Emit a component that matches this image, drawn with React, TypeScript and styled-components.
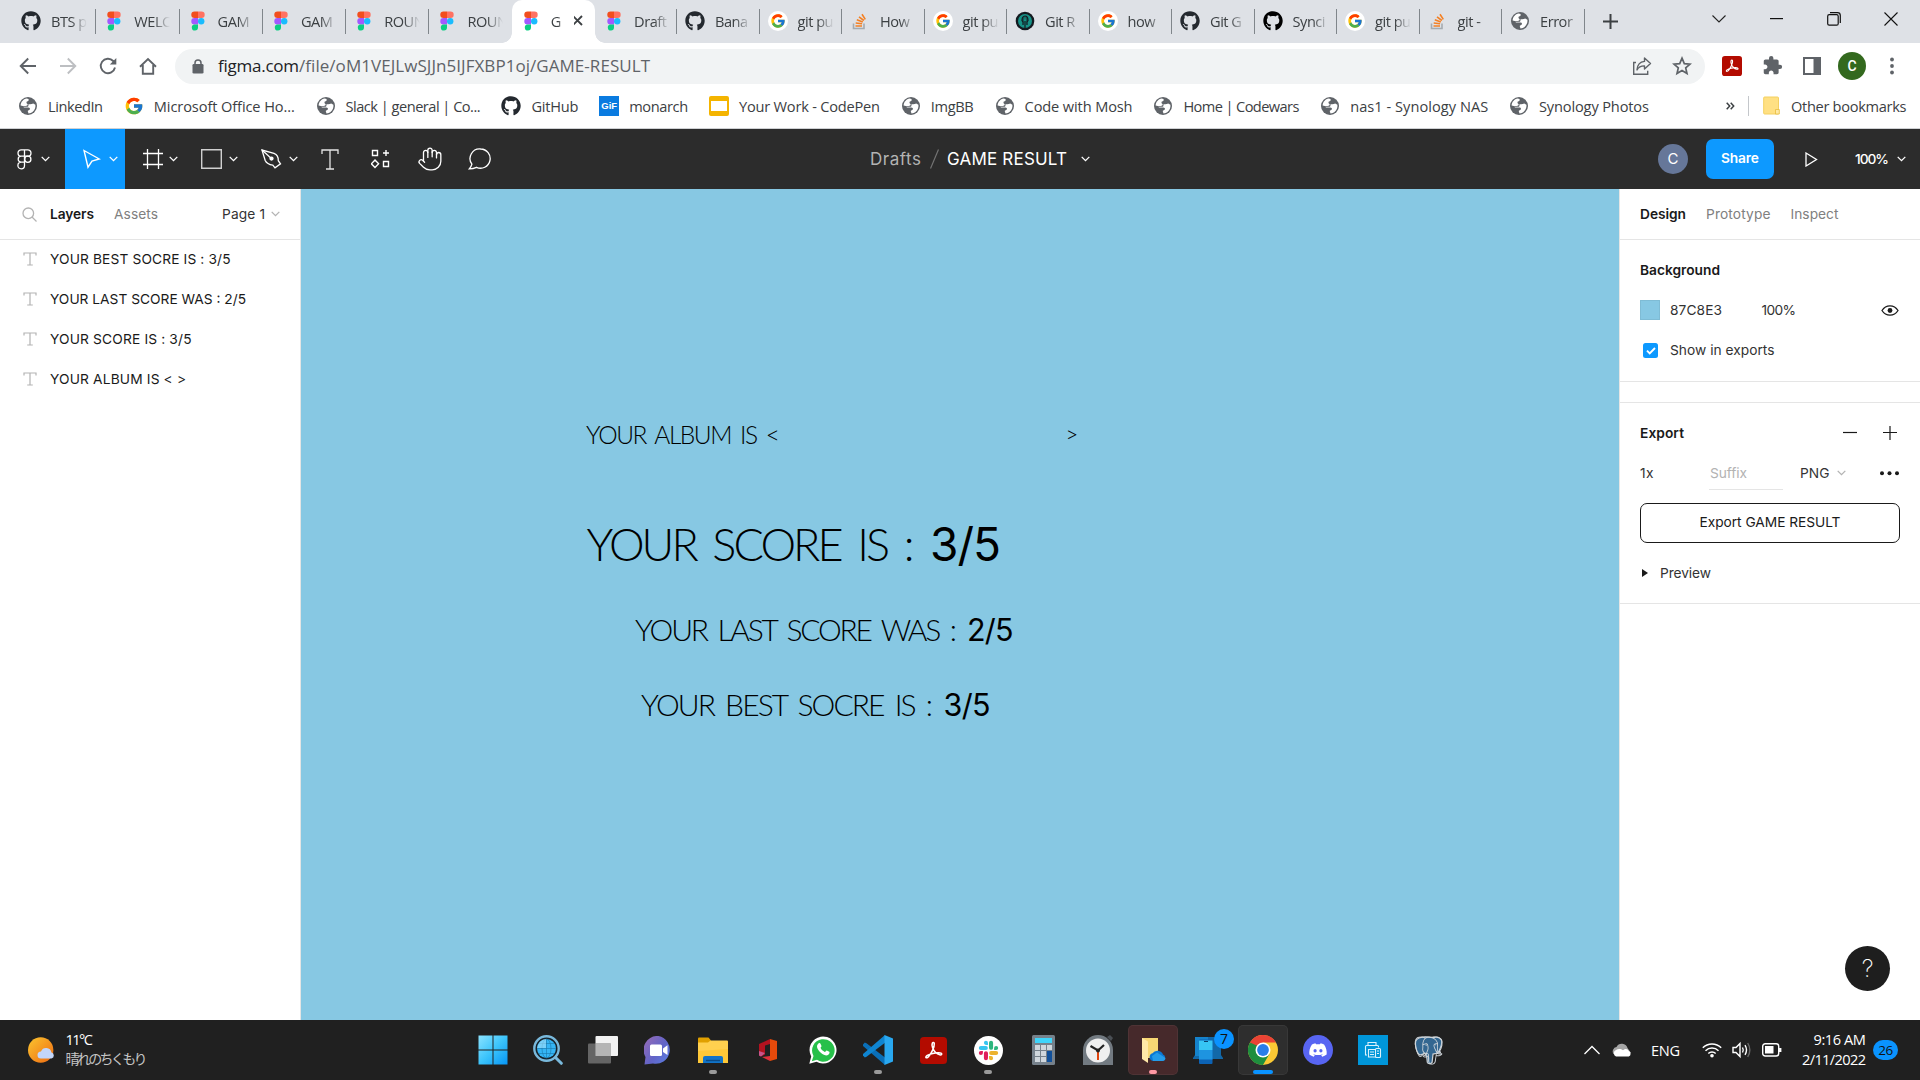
import React, { useLayoutEffect, useRef, useState } from 'react';
import styled, { createGlobalStyle, css } from 'styled-components';
import { Hand } from 'lucide-react';
import { FaGithub, FaDiscord } from 'react-icons/fa';
import { FcGoogle } from 'react-icons/fc';
import { SiPostgresql } from 'react-icons/si';
import { MdExtension } from 'react-icons/md';

const segoe = '"Open Sans", "Noto Sans", "Noto Sans CJK JP", sans-serif';
const inter = 'Inter, "Liberation Sans", sans-serif';

const GlobalStyle = createGlobalStyle`
  * { box-sizing: border-box; }
  html, body { margin: 0; padding: 0; overflow: hidden; }
  svg { display: block; flex: none; }
`;

/* ---------- text tracked out to a fixed measure ---------- */

const Tracked = styled.span<{ $w: number }>`
  display: inline-block;
  flex: none;
  width: ${(p) => p.$w}px;
  white-space: pre;
`;

function Fit({ w, children }: { w: number; children: string }) {
  const ref = useRef<HTMLSpanElement>(null);
  const [spacing, setSpacing] = useState(0);
  useLayoutEffect(() => {
    const el = ref.current;
    if (!el) return;
    const range = document.createRange();
    range.selectNodeContents(el);
    const natural = range.getBoundingClientRect().width;
    setSpacing((w - natural) / Math.max(1, children.length - 1));
  }, [w, children]);
  return (
    <Tracked ref={ref} $w={w} style={{ letterSpacing: spacing }}>
      {children}
    </Tracked>
  );
}

/* ---------- shell ---------- */

const Screen = styled.div`
  width: 1920px;
  height: 1080px;
  display: flex;
  flex-direction: column;
  overflow: hidden;
  background: #fff;
  font-family: ${inter};
`;

/* ---------- browser ---------- */

const Browser = styled.header`
  height: 129px;
  flex: none;
  display: flex;
  flex-direction: column;
  background: #fff;
  border-bottom: 1px solid #cfd1d4;
  font-family: ${segoe};
  color: #3c4043;
`;

const TabStrip = styled.div`
  height: 43px;
  flex: none;
  display: flex;
  align-items: stretch;
  padding-left: 12px;
  background: #dee1e6;
`;

const Tab = styled.div<{ $w: number; $active?: boolean; $rule?: boolean }>`
  position: relative;
  width: ${(p) => p.$w}px;
  flex: none;
  display: flex;
  align-items: center;
  gap: 10px;
  padding: 0 0 2px 9px;
  font-size: 14.6px;
  letter-spacing: -0.5px;
  ${(p) =>
    p.$rule &&
    css`
      &::after {
        content: '';
        position: absolute;
        right: -1px;
        top: 9px;
        width: 1px;
        height: 25px;
        background: #80868b;
      }
    `}
  ${(p) =>
    p.$active &&
    css`
      background: #fff;
      border-radius: 10px 10px 0 0;
      &::before {
        content: '';
        position: absolute;
        left: -10px;
        bottom: 0;
        width: 10px;
        height: 10px;
        background: radial-gradient(circle at 0 0, transparent 9.5px, #fff 10px);
      }
      &::after {
        content: '';
        position: absolute;
        right: -10px;
        bottom: 0;
        width: 10px;
        height: 10px;
        background: radial-gradient(circle at 100% 0, transparent 9.5px, #fff 10px);
      }
    `}
`;

const TabTitle = styled.span<{ $w: number }>`
  width: ${(p) => p.$w}px;
  white-space: pre;
  line-height: 24px;
  mask-image: linear-gradient(90deg, #000 55%, transparent 100%);
`;

const NewTab = styled.div`
  width: 54px;
  display: grid;
  place-items: center;
`;

const WindowKeys = styled.div`
  margin-left: auto;
  display: flex;
  height: 37px;
`;

const WindowKey = styled.div`
  width: 57.4px;
  display: grid;
  place-items: center;
`;

const Bar = styled.div`
  height: 45px;
  flex: none;
  display: flex;
  align-items: center;
  padding-left: 8px;
`;

const NavButton = styled.div<{ $dim?: boolean }>`
  width: 40px;
  flex: none;
  display: grid;
  place-items: center;
  color: ${(p) => (p.$dim ? '#bdbfc2' : '#5f6368')};
`;

const Omnibox = styled.div`
  width: 1530px;
  flex: none;
  height: 35px;
  margin: 1px 0 0 7px;
  padding: 0 13px 0 17px;
  display: flex;
  align-items: center;
  border-radius: 18px;
  background: #f1f3f4;
  font-size: 17px;
`;

const Url = styled.div`
  display: flex;
  margin: -1px 0 0 14px;
  line-height: 30px;
  color: #5f6368;
`;

const Domain = styled.span`
  color: #202124;
`;

const OmniActions = styled.div`
  margin-left: auto;
  display: flex;
  align-items: center;
  gap: 20px;
`;

const Extensions = styled.div`
  display: flex;
  align-items: center;
  margin-left: 7px;
`;

const ExtensionCell = styled.div`
  width: 40px;
  display: grid;
  place-items: center;
`;

const ChromeAvatar = styled.div`
  width: 28px;
  height: 28px;
  margin-left: 6px;
  border-radius: 50%;
  background: #33691e;
  color: #fff;
  font: 500 14px/28px Roboto, sans-serif;
  text-align: center;
`;

const Kebab = styled.div`
  width: 52px;
  display: grid;
  place-items: center;
  color: #5f6368;
`;

const Bookmarks = styled.div`
  flex: 1;
  display: flex;
  align-items: center;
  padding: 0 13.5px 5px 18px;
  font-size: 14.6px;
  gap: 20.8px;
`;

const Bookmark = styled.div`
  display: flex;
  align-items: center;
  gap: 10px;
  height: 24px;
  line-height: 22px;
`;

const Overflow = styled.div`
  margin-left: auto;
  display: flex;
  align-items: center;
  height: 24px;
`;

const Rule = styled.div`
  width: 1px;
  height: 20px;
  margin: 0 14px 0 13px;
  background: #c4c7cb;
`;

const GifMark = styled.div`
  width: 20px;
  height: 20px;
  background: #0a7be0;
  color: #fff;
  font: 700 9.5px/20px "Liberation Sans", sans-serif;
  text-align: center;
`;

const SlideMark = styled.div`
  width: 20px;
  height: 20px;
  border-radius: 2px;
  border: solid #f4b400;
  border-width: 5px 2.5px;
  background: #fff;
`;

/* ---------- editor ---------- */

const Toolbar = styled.div`
  height: 60px;
  flex: none;
  display: grid;
  grid-template-columns: 1fr auto 1fr;
  background: #2c2c2c;
  color: #fff;
`;

const Tools = styled.div`
  display: flex;
`;

const Tool = styled.div<{ $w: number; $active?: boolean; $pad?: number }>`
  width: ${(p) => p.$w}px;
  display: flex;
  align-items: center;
  justify-content: ${(p) => (p.$pad === undefined ? 'center' : 'space-between')};
  padding: ${(p) => (p.$pad === undefined ? '0' : `0 7px 0 ${p.$pad}px`)};
  background: ${(p) => (p.$active ? '#0d99ff' : 'transparent')};
`;

const FileTitle = styled.div`
  display: flex;
  align-items: center;
  font-size: 17px;
  color: #fff;
  padding-left: 40px;
`;

const Folder = styled.span`
  color: #b3b3b3;
`;

const SlashMark = styled.div`
  width: 26px;
  display: grid;
  place-items: center;
`;

const TitleCaret = styled.div`
  margin-left: 14px;
`;

const Session = styled.div`
  display: flex;
  align-items: center;
  justify-content: flex-end;
  padding-right: 14.5px;
`;

const Collaborator = styled.div`
  width: 30px;
  height: 30px;
  border-radius: 50%;
  background: #667799;
  font-size: 15px;
  line-height: 30px;
  text-align: center;
`;

const ShareButton = styled.div`
  width: 68px;
  height: 40px;
  margin: 0 31px 0 18px;
  border-radius: 7px;
  background: #0d99ff;
  font-size: 13.75px;
  font-weight: 600;
  line-height: 38px;
  display: flex;
  justify-content: center;
`;

const Zoom = styled.div`
  display: flex;
  align-items: center;
  gap: 7.5px;
  margin-left: 37px;
  font-size: 13.75px;
  font-weight: 500;
`;

const Workspace = styled.div`
  flex: 1;
  display: flex;
  min-height: 0;
  font-size: 13.75px;
  color: #1a1a1a;
`;

const Layers = styled.aside`
  width: 301px;
  flex: none;
  border-right: 1px solid #e5e5e5;
`;

const PanelHead = styled.div<{ $left: number }>`
  height: 51px;
  display: flex;
  align-items: center;
  padding: 0 20px 0 ${(p) => p.$left}px;
  border-bottom: 1px solid #e5e5e5;
`;

const HeadTab = styled.div<{ $on?: boolean; $gap?: number }>`
  display: flex;
  margin-left: ${(p) => p.$gap ?? 0}px;
  font-weight: ${(p) => (p.$on ? 600 : 400)};
  color: ${(p) => (p.$on ? '#1a1a1a' : '#808080')};
`;

const PageMenu = styled.div`
  margin-left: auto;
  display: flex;
  align-items: center;
  gap: 6px;
  color: #333;
`;

const LayerRow = styled.div`
  height: 40px;
  display: flex;
  align-items: center;
  gap: 13px;
  padding-left: 23px;
  color: #1a1a1a;
  &:nth-child(2) { margin-top: -1px; }
`;

const Canvas = styled.main`
  position: relative;
  flex: 1;
  background: #87c8e3;
  color: #000;
`;

const CanvasText = styled.div<{ $x: number; $y: number; $size: number; $digits?: boolean }>`
  position: absolute;
  left: ${(p) => p.$x}px;
  top: ${(p) => p.$y}px;
  font-family: ${(p) => (p.$digits ? inter : 'Lato, sans-serif')};
  font-weight: ${(p) => (p.$digits ? 400 : 300)};
  font-size: ${(p) => p.$size}px;
  word-spacing: 0.16em;
  line-height: 1;
`;

const Inspector = styled.aside`
  position: relative;
  width: 301px;
  flex: none;
  border-left: 1px solid #e5e5e5;
`;

const Section = styled.section<{ $h: number }>`
  height: ${(p) => p.$h}px;
  border-bottom: 1px solid #e5e5e5;
  padding: 10px 20px 0;
`;

const Row = styled.div`
  height: 40px;
  display: flex;
  align-items: center;
`;

const Strong = styled.div`
  font-weight: 600;
  display: flex;
`;

const Cell = styled.div<{ $w: number }>`
  width: ${(p) => p.$w}px;
  display: flex;
  color: #333;
`;

const Push = styled.div<{ $edge: number }>`
  margin-left: auto;
  margin-right: ${(p) => p.$edge}px;
  display: flex;
  align-items: center;
  gap: 26px;
`;

const Swatch = styled.div`
  width: 20px;
  height: 20px;
  margin-right: 10px;
  border: 1px solid #7fbcd5;
  background: #87c8e3;
`;

const Checkbox = styled.div`
  width: 15px;
  height: 15px;
  margin: 1px 12px 0 3px;
  border-radius: 2.5px;
  background: #0d99ff;
  display: grid;
  place-items: center;
`;

const SuffixField = styled.div`
  width: 74px;
  height: 34px;
  margin: -1px 17px 0 -1px;
  padding: 2px 0 0 1px;
  display: flex;
  align-items: center;
  border-bottom: 1px solid #e5e5e5;
  color: #b3b3b3;
`;

const ExportButton = styled.div`
  height: 40px;
  margin-top: 10px;
  border: 1px solid #1a1a1a;
  border-radius: 7px;
  display: flex;
  justify-content: center;
  line-height: 37px;
`;

const PreviewRow = styled.div`
  height: 60px;
  display: flex;
  align-items: center;
  gap: 12px;
  padding-left: 2px;
  color: #333;
`;

const Help = styled.div`
  position: absolute;
  right: 30px;
  bottom: 29px;
  width: 45px;
  height: 45px;
  border-radius: 50%;
  background: #1e1e1e;
  color: #fff;
  font-size: 24px;
  font-weight: 200;
  line-height: 45px;
  text-align: center;
`;

/* ---------- taskbar ---------- */

const Taskbar = styled.footer`
  height: 60px;
  flex: none;
  display: flex;
  align-items: stretch;
  background: #202020;
  color: #fff;
  font-family: ${segoe};
  font-size: 14.6px;
`;

const Weather = styled.div`
  width: 465px;
  display: flex;
  align-items: center;
  gap: 9.5px;
  padding-left: 28px;
`;

const Lines = styled.div<{ $end?: boolean }>`
  display: flex;
  flex-direction: column;
  align-items: ${(p) => (p.$end ? 'flex-end' : 'flex-start')};
  line-height: 20px;
  padding-bottom: 2px;
`;

const Forecast = styled.span`
  color: #c4c4c4;
  font-size: 14px;
`;

const Apps = styled.div`
  display: flex;
  gap: 5px;
  padding: 5px 0 5px 3px;
`;

const AppTile = styled.div<{ $tone?: string }>`
  position: relative;
  width: 50px;
  height: 50px;
  border-radius: 5px;
  display: grid;
  place-items: center;
  background: ${(p) => p.$tone ?? 'transparent'};
  box-shadow: ${(p) => (p.$tone ? 'inset 0 0 0 1px rgba(255,255,255,.05)' : 'none')};
`;

const Running = styled.i<{ $w: number; $color: string }>`
  position: absolute;
  bottom: 1px;
  left: ${(p) => 25 - p.$w / 2}px;
  width: ${(p) => p.$w}px;
  height: 4px;
  border-radius: 2px;
  background: ${(p) => p.$color};
`;

const Count = styled.b`
  position: absolute;
  right: -1px;
  top: 4px;
  width: 20px;
  height: 20px;
  border-radius: 50%;
  background: #0a93ff;
  color: #111;
  font-weight: 400;
  font-size: 14px;
  line-height: 20px;
  text-align: center;
`;

const Tray = styled.div`
  margin-left: auto;
  display: flex;
  align-items: center;
  padding-right: 22px;
`;

const TrayItem = styled.div<{ $gap: number }>`
  display: flex;
  margin-right: ${(p) => p.$gap}px;
`;

const Notices = styled.div`
  width: 25px;
  height: 20px;
  border-radius: 10px;
  background: #0a93ff;
  color: #111;
  font-size: 13.5px;
  line-height: 21px;
  text-align: center;
  letter-spacing: -0.4px;
`;

/* ---------- icons ---------- */

const Caret = ({ color = '#fff' }: { color?: string }) => (
  <svg width="9" height="6" viewBox="0 0 9 6" fill="none" stroke={color} strokeWidth="1.3">
    <path d="M.7.9 4.5 4.6 8.3.9" />
  </svg>
);

const FigmaLogo = () => (
  <svg width="20" height="20" viewBox="0 0 20 20">
    <path d="M10 .6H6.5a3.2 3.2 0 0 0 0 6.4H10z" fill="#f24e1e" />
    <path d="M10 .6h3.5a3.2 3.2 0 0 1 0 6.4H10z" fill="#ff7262" />
    <path d="M10 7H6.5a3.2 3.2 0 0 0 0 6.4H10z" fill="#a259ff" />
    <circle cx="13.2" cy="10.2" r="3.2" fill="#1abcfe" />
    <path d="M6.5 13.4a3.1 3.1 0 1 0 3.5 3.1v-3.1z" fill="#0acf83" />
  </svg>
);

const Globe = () => (
  <svg width="20" height="20" viewBox="0 0 20 20">
    <circle cx="10" cy="10" r="9" fill="#5f6368" />
    <path
      fill="#fff"
      d="M2.600 9.600C2.800 6 5.300 3.200 8.700 2.600L10.500 3c.6 1.300-.2 2.300-1.700 2.500l-.4 1.400 1.300 1.400c-.1 1.200-.8 1.700-2 1.700H4.800z"
    />
    <path fill="#fff" d="M10.500 8.200c2 .2 3.600.1 4.700-.7l2.200 1.300c.4 2.600-.7 5.400-2.900 7.100-.9.700-2.500 1.400-4 1.500l-.8-2.300c.4-1 1.900-.9 2.200-1.900.3-1.100-.5-1.500-1.600-1.600H6.200l-1.200-.9h4.500c.8 0 1-.4 1-2.500z" />
  </svg>
);

const GoogleTab = () => (
  <svg width="20" height="20" viewBox="0 0 20 20">
    <circle cx="10" cy="10" r="10" fill="#fff" />
    <FcGoogle x="2" y="2" size={16} />
  </svg>
);

const StackTab = () => (
  <svg width="20" height="20" viewBox="0 0 20 20" fill="none">
    <path d="M3.500 12.500v5h10.500v-5" stroke="#a5abb0" strokeWidth="1.600" />
    <path d="M5.500 15h6.500M5.700 12l6.400.8M6.800 8.800l6 2.200M9 5.800l4.900 3.700M12 3.300l3.300 5.100" stroke="#f48024" strokeWidth="1.600" />
  </svg>
);

const KrakenTab = () => (
  <svg width="20" height="20" viewBox="0 0 20 20">
    <circle cx="10" cy="10" r="9.300" fill="#141a20" />
    <circle cx="10" cy="10" r="7" fill="#179287" />
    <path d="M10 5c-2 0-3 2-3 4.500l1 1.500v3M10 5c2 0 3 2 3 4.500l-1 1.500v3M10 10v7" stroke="#141a20" strokeWidth="1.200" fill="#141a20" fillOpacity=".45" />
  </svg>
);

const Acrobat = ({ size }: { size: number }) => (
  <svg width={size} height={size} viewBox="0 0 28 28">
    <rect width="28" height="28" rx="4" fill="#b30b00" />
    <path
      d="M6.200 21.300c-.9-1.200 2.200-3.300 7-4.300 4.500-1 9-.9 9.300.6.3 1.800-3.700 1-6.300-1.500-3-2.900-4.400-7.600-3.400-9.800.5-1 1.900-.8 2 .6.300 3.300-2.800 10.200-6 13.500-1 1-2.100 1.500-2.600.9z"
      fill="none"
      stroke="#fff"
      strokeWidth="1.600"
    />
  </svg>
);

const Share = () => (
  <svg width="20" height="20" viewBox="0 0 20 20" fill="none" stroke="#5f6368" strokeWidth="1.400">
    <path d="M4 6.500H1.700V18.300h14v-3.500" />
    <path d="M12.500 2l6 5.500-6 5.500V9.900c-3.800-.1-6 1.300-7.500 4 .3-4.600 2.700-8 7.500-8.500z" strokeLinejoin="round" />
  </svg>
);

const Star = () => (
  <svg width="20" height="20" viewBox="0 0 20 20" fill="none" stroke="#5f6368" strokeWidth="1.700">
    <path d="M10 2.200l2.300 5.400 5.800.5-4.400 3.800 1.300 5.700-5-3-5 3 1.300-5.700L1.900 8.100l5.800-.5z" />
  </svg>
);

const Chrome = () => (
  <svg width="30" height="30" viewBox="0 0 30 30">
    <circle cx="15" cy="15" r="15" fill="#fcc934" />
    <path d="M15 15 2 7.500A15 15 0 0 0 15 30l6.500-11.300z" fill="#1e8e3e" />
    <path d="M15 15H8.500L2 7.500a15 15 0 0 1 26 0H15z" fill="#ea4335" />
    <path d="M2 7.500l6.500 11.200L12 12z" fill="#1e8e3e" />
    <circle cx="15" cy="15" r="7.500" fill="#fff" />
    <circle cx="15" cy="15" r="5.900" fill="#2a7de9" />
  </svg>
);

const Slack = () => (
  <svg width="29" height="29" viewBox="-6 -6 36 36">
    <circle cx="12" cy="12" r="18" fill="#fff" />
    {['#e01e5a', '#36c5f0', '#2eb67d', '#ecb22e'].map((c, i) => (
      <path
        key={c}
        fill={c}
        transform={`rotate(${i * 90} 12 12)`}
        d="M5.042 15.165a2.528 2.528 0 0 1-2.52 2.523A2.528 2.528 0 0 1 0 15.165a2.527 2.527 0 0 1 2.522-2.520h2.520zM6.313 15.165a2.527 2.527 0 0 1 5.042 0v6.313a2.521 2.521 0 0 1-5.042 0z"
      />
    ))}
  </svg>
);

const Windows = () => (
  <svg width="30" height="30" viewBox="0 0 30 30">
    <defs>
      <linearGradient id="win" x1="0" y1="0" x2="1" y2="1">
        <stop stopColor="#8be3ff" />
        <stop offset=".5" stopColor="#3cc4fb" />
        <stop offset="1" stopColor="#0695f5" />
      </linearGradient>
    </defs>
    <path d="M.5.500h14v14H.5zM15.500.500h14v14h-14zM.5 15.500h14v14H.5zM15.500 15.500h14v14h-14z" fill="url(#win)" />
  </svg>
);

const SearchGlobe = () => (
  <svg width="30" height="30" viewBox="0 0 30 30" fill="none">
    <path d="M22 22l6.300 6.300" stroke="#79b9dc" strokeWidth="3" strokeLinecap="round" />
    <circle cx="13.500" cy="13.500" r="12.200" stroke="#79b9dc" strokeWidth="2.400" fill="#17222a" />
    <circle cx="13.500" cy="13.500" r="9.500" fill="#35b5f5" />
    <path d="M13.500 4v19M4 13.500h19M5.500 8.500h16M5.500 18.500h16" stroke="#1b78ab" strokeWidth=".6" />
    <ellipse cx="13.500" cy="13.500" rx="4.500" ry="9.500" stroke="#1b78ab" strokeWidth=".6" />
    <path d="M5 10a9.500 9.500 0 0 1 8-6v9H4z" fill="#a6e3fb" fillOpacity=".6" />
  </svg>
);

const TaskView = () => (
  <svg width="30" height="28" viewBox="0 0 30 28">
    <rect x="7.500" y="0" width="22.500" height="20" rx="1" fill="#f2f2f2" />
    <rect x="0" y="7.500" width="23" height="20" rx="1" fill="#6d6d6d" fillOpacity=".9" />
    <path d="M7.500 7.500H23V20H7.500z" fill="#b5b5b5" />
  </svg>
);

const Chat = () => (
  <svg width="29" height="29" viewBox="0 0 29 29">
    <defs>
      <linearGradient id="chat" x1="0" y1="0" x2="1" y2=".8">
        <stop stopColor="#9a6bb5" />
        <stop offset=".6" stopColor="#6264c7" />
        <stop offset="1" stopColor="#5b7be0" />
      </linearGradient>
    </defs>
    <path d="M14.500 0a14 14 0 1 1-5.500 27.500L.5 28.500 1.500 21A14 14 0 0 1 14.500 0z" fill="url(#chat)" />
    <rect x="6" y="8.500" width="12" height="11.500" rx="1.500" fill="#fff" />
    <path d="M19 12.500l4.500-3.200v9.800L19 16z" fill="#fff" />
  </svg>
);

const Explorer = () => (
  <svg width="30" height="27" viewBox="0 0 30 27">
    <path d="M0 1.500Q0 .5 1 .5h9.500L13 3.500V8H0z" fill="#e0a000" />
    <path d="M0 5.500h10L12.500 3.500H29q1 0 1 1V26H0z" fill="#ffd04f" />
    <path d="M0 14l30-2v14H0z" fill="#fdc42e" fillOpacity=".7" />
    <path d="M5 26v-5q0-2 2-2h16q2 0 2 2v5z" fill="#1173c7" />
    <path d="M8 23.500h14" stroke="#0a4a86" strokeWidth="1.400" />
  </svg>
);

const Office = () => (
  <svg width="18" height="22" viewBox="0 0 18 22">
    <path d="M0 5 11 0v5L6 6.500v9L2 17.500 0 16.500z" fill="#b3121f" />
    <path d="M11 0l7 2v18l-7 2V5z" fill="#e64a0b" />
    <path d="M3 18l8-1v5z" fill="#e0303a" />
    <path d="M0 12l6 2-4 3.500-2-1z" fill="#c6558c" />
  </svg>
);

const WhatsApp = () => (
  <svg width="28" height="28" viewBox="0 0 28 28">
    <path d="M.3 27.700 2.200 20.500A13.500 13.500 0 1 1 7.500 25.800z" fill="#fff" />
    <path d="M2.800 25.200 4.500 20A11.300 11.300 0 1 1 8 23.800z" fill="#27c04a" />
    <path
      d="M9.500 7.500c.8-.7 1.700-.5 2 .2l1 2.400c.2.600-1.100 1.600-.9 2 .8 1.800 2.200 3 4.200 3.800.6.200 1.400-1.600 2-1.300l2.500 1.200c.8.500-.1 3-1.800 3.500-1.600.5-4.200-.4-6.700-2.500-2.300-2-3.800-4.500-3.800-6.300 0-1.300.8-2.400 1.500-3z"
      fill="#fff"
    />
  </svg>
);

const Code = () => (
  <svg width="30" height="30" viewBox="0 0 30 30">
    <path d="M22 7.500v15L3.500 8.200 1.800 7.400 0 9.500v1.500L22 30z" fill="#0a6fb8" />
    <path d="M22 0 0 19v1.500l1.800 2.100 1.700-.8L22 7.800z" fill="#0f85d1" />
    <path d="M21.500 0 30 3.500v23L21.500 30z" fill="#29a8f0" />
  </svg>
);

const Calculator = () => (
  <svg width="23" height="30" viewBox="0 0 23 30">
    <rect width="23" height="30" rx="1.500" fill="#76818b" />
    <rect x="3" y="3" width="17" height="5" fill="#3fd5fb" />
    {[0, 1, 2].map((r) =>
      [0, 1, 2].map((c) => (
        <rect key={`${r}${c}`} x={3 + c * 6} y={10 + r * 6} width="5" height="5" fill={c === 2 && r > 0 ? '#11509a' : '#d0d7dd'} />
      )),
    )}
    <path d="M15 20h5v3h-5z" fill="#11509a" />
  </svg>
);

const Clock = () => (
  <svg width="30" height="30" viewBox="0 0 30 30">
    <path d="M24 2l3-2 3 3-2 3z" fill="#4a4f54" />
    <path d="M0 15a15 15 0 0 1 30 0v15H0z" fill="#727a81" />
    <circle cx="15" cy="15.500" r="12" fill="#efefef" />
    <path d="M15 15.500V25" stroke="#e0440e" strokeWidth="2" />
    <path d="M7.500 11l7.500 4.500 6-5.500" stroke="#222" strokeWidth="2.200" fill="none" />
    <circle cx="15" cy="15.500" r="2" fill="#222" />
  </svg>
);

const CloudFolder = () => (
  <svg width="26" height="28" viewBox="0 0 26 28">
    <path d="M2 2h16v20H2z" fill="#f7d774" />
    <path d="M2 2l6 3.500V27l-6-4z" fill="#ffe9a8" />
    <path d="M13 25a4 4 0 0 1-.5-7.800 6 6 0 0 1 10.500 1.300 3.400 3.400 0 0 1-.5 6.500z" fill="#0b78d4" />
    <path d="M12 20l5-3.500 8.500 5.500a3.300 3.300 0 0 1-3 3H13z" fill="#249be8" />
  </svg>
);

const Devices = () => (
  <svg width="30" height="27" viewBox="0 0 30 27">
    <path d="M2 0h26v18l2 3v1H0v-1l2-3z" fill="#1268a8" />
    <rect x="2" y="0" width="13" height="19" fill="#1583cc" />
    <rect x="6" y="2.500" width="13.500" height="24.500" rx="1" fill="#0c63b5" />
    <path d="M6 3.500h13.500V13H6z" fill="#37c6f4" />
    <path d="M6 13h13.500v9.500H6z" fill="#1e94e0" />
    <path d="M11 4.500h4" stroke="#08406e" />
  </svg>
);

const Discord = () => (
  <svg width="30" height="30" viewBox="0 0 30 30">
    <circle cx="15" cy="15" r="15" fill="#5865f2" />
    <FaDiscord x="5.500" y="5.500" size={19} color="#fff" />
  </svg>
);

const Printer = () => (
  <svg width="30" height="30" viewBox="0 0 30 30" fill="none" stroke="#d9f1fc" strokeWidth="1.100">
    <rect width="30" height="30" fill="#0096d9" stroke="none" />
    <path d="M10 10.500V7.500h8v3M9 20H7.500v-8.500q0-1 1-1h11q1 0 1 1v1M10.500 14.500h8v7.500h-8zM12 17h4M12 19.500h4" />
    <rect x="17.500" y="13.500" width="5" height="9" rx="1" fill="#0096d9" />
    <path d="M19 16h2M19 18.500h2" />
  </svg>
);

const Elephant = () => (
  <svg width="31" height="31" viewBox="-1 -1 26 26">
    <path d="M4 1.500C1 2.500.5 6 1.500 10c.8 3.500 2.500 6.500 4.500 5.500l3-1 1.500 2.500.5 5c.5 1.500 3 1.500 4 0l.8-7 2.200-.5 3.500-.5c1-.5.500-1-.5-1 2-3 3-7.500 2-9.500C21.500.5 18 .5 15.500 1.200 12 .5 8 0 4 1.500z" fill="#336791" stroke="#cfd5da" strokeWidth="1" />
    <SiPostgresql size={24} color="#cfd5da" />
  </svg>
);

const Sun = () => (
  <svg width="28" height="28" viewBox="0 0 28 28">
    <defs>
      <linearGradient id="sun" x1="0" y1="0" x2="1" y2="1">
        <stop stopColor="#fbc52f" />
        <stop offset="1" stopColor="#ee6a12" />
      </linearGradient>
    </defs>
    <circle cx="12.700" cy="14" r="12.700" fill="url(#sun)" />
    <path d="M13 22.500a3.500 3.500 0 0 1 0-7 5.500 5.500 0 0 1 10.500 1 3.100 3.100 0 0 1 0 6z" fill="#c3d6fa" />
  </svg>
);

/* ---------- data ---------- */

const github = <FaGithub size={20} color="#24292f" />;
const tabs: { icon: React.ReactNode; title: string }[] = [
  { icon: github, title: 'BTS p' },
  { icon: <FigmaLogo />, title: 'WELC' },
  { icon: <FigmaLogo />, title: 'GAM' },
  { icon: <FigmaLogo />, title: 'GAM' },
  { icon: <FigmaLogo />, title: 'ROUN' },
  { icon: <FigmaLogo />, title: 'ROUN' },
  { icon: <FigmaLogo />, title: 'G' },
  { icon: <FigmaLogo />, title: 'Draft' },
  { icon: github, title: 'Bana' },
  { icon: <GoogleTab />, title: 'git pu' },
  { icon: <StackTab />, title: 'How' },
  { icon: <GoogleTab />, title: 'git pu' },
  { icon: <KrakenTab />, title: 'Git R' },
  { icon: <GoogleTab />, title: 'how' },
  { icon: github, title: 'Git G' },
  { icon: <FaGithub size={20} color="#000" />, title: 'Synci' },
  { icon: <GoogleTab />, title: 'git pu' },
  { icon: <StackTab />, title: 'git -' },
  { icon: <Globe />, title: 'Error' },
];

const tabWidth = (i: number) => (i < 7 ? 83.3 : i === 7 ? 81 : 82.5);
const titleWidth = (i: number) => (i === 6 ? 13 : i === 18 ? 60 : 36);

const bookmarks: { icon: React.ReactNode; label: string; w: number }[] = [
  { icon: <Globe />, label: 'LinkedIn', w: 55 },
  { icon: <FcGoogle size={20} />, label: 'Microsoft Office Ho...', w: 141 },
  { icon: <Globe />, label: 'Slack | general | Co...', w: 135 },
  { icon: github, label: 'GitHub', w: 47 },
  { icon: <GifMark>GiF</GifMark>, label: 'monarch', w: 59 },
  { icon: <SlideMark />, label: 'Your Work - CodePen', w: 141 },
  { icon: <Globe />, label: 'ImgBB', w: 43 },
  { icon: <Globe />, label: 'Code with Mosh', w: 108 },
  { icon: <Globe />, label: 'Home | Codewars', w: 116 },
  { icon: <Globe />, label: 'nas1 - Synology NAS', w: 138 },
  { icon: <Globe />, label: 'Synology Photos', w: 110 },
];

const layers = [
  { label: 'YOUR BEST SOCRE IS : 3/5', w: 180.5 },
  { label: 'YOUR LAST SCORE WAS : 2/5', w: 196 },
  { label: 'YOUR SCORE IS : 3/5', w: 141.5 },
  { label: 'YOUR ALBUM IS < >', w: 136 },
];

const canvasTexts = [
  { x: 586, y: 422.5, size: 24.5, text: 'YOUR ALBUM IS <', w: 194 },
  { x: 1065.5, y: 422.5, size: 22, text: '>', w: 10 },
  { x: 586.5, y: 521.5, size: 45, text: 'YOUR SCORE IS :', w: 328 },
  { x: 930, y: 521, size: 46, text: '3/5', w: 71, digits: true },
  { x: 635, y: 613.5, size: 30, text: 'YOUR LAST SCORE WAS :', w: 322 },
  { x: 967, y: 615, size: 30.5, text: '2/5', w: 46.5, digits: true },
  { x: 641, y: 688.5, size: 30, text: 'YOUR BEST SOCRE IS :', w: 292 },
  { x: 943.5, y: 690, size: 30.5, text: '3/5', w: 47, digits: true },
];

const idle = '#9a9a9a';
const apps: { icon: React.ReactNode; tone?: string; run?: [number, string]; count?: string }[] = [
  { icon: <Windows /> },
  { icon: <SearchGlobe /> },
  { icon: <TaskView /> },
  { icon: <Chat /> },
  { icon: <Explorer />, run: [8, idle] },
  { icon: <Office /> },
  { icon: <WhatsApp /> },
  { icon: <Code />, run: [8, idle] },
  { icon: <Acrobat size={27} /> },
  { icon: <Slack />, run: [8, idle] },
  { icon: <Calculator /> },
  { icon: <Clock /> },
  { icon: <CloudFolder />, tone: '#46292b', run: [8, '#ff99a4'] },
  { icon: <Devices />, count: '7' },
  { icon: <Chrome />, tone: '#2e2e2e', run: [20, '#0a93ff'] },
  { icon: <Discord /> },
  { icon: <Printer /> },
  { icon: <Elephant /> },
];

const GlyphT = ({ size, color, sw }: { size: number; color: string; sw: number }) => (
  <svg width={size} height={size} viewBox={`0 0 ${size} ${size}`} fill="none" stroke={color} strokeWidth={sw}>
    <path d={`M1 ${size * 0.25}V1H${size - 1}V${size * 0.25}M${size / 2} 1V${size - 1}M${size * 0.3} ${size - 1}H${size * 0.7}`} />
  </svg>
);

/* ---------- page ---------- */

export default function App() {
  return (
    <>
      <GlobalStyle />
      <Screen>
        <Browser>
          <TabStrip>
            {tabs.map((t, i) => (
              <Tab key={i} $w={tabWidth(i)} $active={i === 6} $rule={i !== 5 && i !== 6}>
                {t.icon}
                <TabTitle $w={titleWidth(i)}>{t.title}</TabTitle>
                {i === 6 && (
                  <svg width="11" height="11" viewBox="0 0 11 11" stroke="#3c4043" strokeWidth="1.900">
                    <path d="M1 1l9 9M10 1l-9 9" transform="translate(-2 0)" />
                  </svg>
                )}
              </Tab>
            ))}
            <NewTab>
              <svg width="15" height="15" viewBox="0 0 15 15" stroke="#3c4043" strokeWidth="2">
                <path d="M7.500 0v15M0 7.500h15" />
              </svg>
            </NewTab>
            <WindowKeys>
              <WindowKey>
                <svg width="14" height="8" viewBox="0 0 14 8" fill="none" stroke="#222" strokeWidth="1.100">
                  <path d="M.5.500 7 7 13.500.500" />
                </svg>
              </WindowKey>
              <WindowKey>
                <svg width="13" height="2" viewBox="0 0 13 2">
                  <path d="M0 0h13v1.200H0z" fill="#111" />
                </svg>
              </WindowKey>
              <WindowKey>
                <svg width="14" height="14" viewBox="0 0 14 14" fill="none" stroke="#111" strokeWidth="1.200">
                  <rect x=".7" y="2.700" width="10.500" height="10.500" rx="1.500" />
                  <path d="M3 .7h7.500a2.800 2.800 0 0 1 2.800 2.800v7.500" />
                </svg>
              </WindowKey>
              <WindowKey>
                <svg width="14" height="14" viewBox="0 0 14 14" stroke="#111" strokeWidth="1.100">
                  <path d="M.5.500l13 13M13.500.500l-13 13" />
                </svg>
              </WindowKey>
            </WindowKeys>
          </TabStrip>
          <Bar>
            <NavButton>
              <svg width="18" height="18" viewBox="0 0 18 18" fill="none" stroke="currentColor" strokeWidth="1.900">
                <path d="M17 9H2M9.200 1.500 1.700 9l7.500 7.500" />
              </svg>
            </NavButton>
            <NavButton $dim>
              <svg width="18" height="18" viewBox="0 0 18 18" fill="none" stroke="currentColor" strokeWidth="1.900">
                <path d="M1 9h15M8.800 1.500 16.300 9l-7.500 7.500" />
              </svg>
            </NavButton>
            <NavButton>
              <svg width="18" height="18" viewBox="0 0 18 18" fill="none" stroke="currentColor" strokeWidth="1.900">
                <path d="M16 10.500A7.200 7.200 0 1 1 14.200 4L16 6" />
                <path d="M17.300 1v6.500h-6.500z" fill="currentColor" stroke="none" />
              </svg>
            </NavButton>
            <NavButton>
              <svg width="18" height="18" viewBox="0 0 18 18" fill="none" stroke="currentColor" strokeWidth="1.900">
                <path d="M1 9.800 9 2l8 7.800M3.800 8v8.800h10.400V8" />
              </svg>
            </NavButton>
            <Omnibox>
              <svg width="12" height="15" viewBox="0 0 12 15">
                <rect x=".5" y="5" width="11" height="9.500" rx="1.300" fill="#5f6368" />
                <path d="M3 5.500V4a3 3 0 0 1 6 0v1.500" fill="none" stroke="#5f6368" strokeWidth="1.500" />
              </svg>
              <Url>
                <Domain>
                  <Fit w={81}>figma.com</Fit>
                </Domain>
                <Fit w={351}>/file/oM1VEJLwSJJn5IJFXBP1oj/GAME-RESULT</Fit>
              </Url>
              <OmniActions>
                <Share />
                <Star />
              </OmniActions>
            </Omnibox>
            <Extensions>
              <ExtensionCell>
                <Acrobat size={20} />
              </ExtensionCell>
              <ExtensionCell>
                <MdExtension size={21} color="#5f6368" />
              </ExtensionCell>
              <ExtensionCell>
                <svg width="18" height="18" viewBox="0 0 18 18">
                  <path d="M1 1h16v16H1z" fill="none" stroke="#5f6368" strokeWidth="2" />
                  <path d="M10.500 1H17v16h-6.500z" fill="#5f6368" />
                </svg>
              </ExtensionCell>
              <ChromeAvatar>C</ChromeAvatar>
              <Kebab>
                <svg width="4" height="18" viewBox="0 0 4 18" fill="currentColor">
                  <circle cx="2" cy="2.500" r="1.900" />
                  <circle cx="2" cy="9" r="1.900" />
                  <circle cx="2" cy="15.500" r="1.900" />
                </svg>
              </Kebab>
            </Extensions>
          </Bar>
          <Bookmarks>
            {bookmarks.map((b) => (
              <Bookmark key={b.label}>
                {b.icon}
                <Fit w={b.w}>{b.label}</Fit>
              </Bookmark>
            ))}
            <Overflow>
              <svg width="9" height="8" viewBox="0 0 9 8" fill="none" stroke="#3c4043" strokeWidth="1.500">
                <path d="M.7.700 3.700 4l-3 3.300M4.700.700 7.700 4l-3 3.300" />
              </svg>
              <Rule />
              <Bookmark>
                <svg width="18" height="19" viewBox="0 0 18 19">
                  <path d="M1.500 1h13q1 0 1 1v16h-14q-.8 0-.8-1V2q0-1 .8-1z" fill="#ffe083" stroke="#f4d061" />
                  <path d="M12.500 18v-4.500h3.800V18z" fill="#ffe9a6" stroke="#e8bd3c" strokeWidth=".8" />
                </svg>
                <Fit w={115.5}>Other bookmarks</Fit>
              </Bookmark>
            </Overflow>
          </Bookmarks>
        </Browser>

        <Toolbar>
          <Tools>
            <Tool $w={65} $pad={17}>
              <svg width="15" height="21" viewBox="0 0 15 21" fill="none" stroke="#fff" strokeWidth="1.300">
                <path d="M7.500.800H4.200a3.200 3.200 0 0 0 0 6.400h6.600a3.200 3.200 0 0 0 0-6.400H7.500v15.700a3.300 3.300 0 1 1-3.300-3.300h3.300M7.500 7.200H4.200a3 3 0 0 0 0 6h3.300" />
                <circle cx="10.800" cy="10.200" r="3.100" />
              </svg>
              <svg width="17" height="6" viewBox="-0.500 0 17 6" fill="none" stroke="#fff" strokeWidth="1.300">
                <path d="M.2.900 4 4.600 7.800.900" />
              </svg>
            </Tool>
            <Tool $w={60} $active $pad={18}>
              <svg width="18" height="20" viewBox="0 0 18 20" fill="none" stroke="#fff" strokeWidth="1.400">
                <path d="M1 1.500 16.300 10 9 12 5 18.200z" />
              </svg>
              <Caret />
            </Tool>
            <Tool $w={60} $pad={18}>
              <svg width="20" height="20" viewBox="0 0 20 20" stroke="#fff" strokeWidth="1.300">
                <path d="M4.500 0v20M15.500 0v20M0 4.500h20M0 15.500h20" />
              </svg>
              <Caret />
            </Tool>
            <Tool $w={60} $pad={16}>
              <svg width="21" height="20" viewBox="0 0 21 20" fill="none" stroke="#d0d0d0" strokeWidth="1.400">
                <path d="M.7.700h19.600v18.600H.7z" />
              </svg>
              <Caret />
            </Tool>
            <Tool $w={60} $pad={16}>
              <svg width="21" height="20" viewBox="0 0 21 20" fill="none" stroke="#fff" strokeWidth="1.300">
                <path d="M1 1l3.200 10.500c1.300 2.800 4.200 4.200 7.600 4.600l2.200 2.700 5.500-4-2.200-3.100c.2-4-1.700-6.200-4.300-7.300z" />
                <path d="M1 1l8.800 8" />
                <circle cx="10.500" cy="9.600" r="1.500" fill="#fff" />
              </svg>
              <Caret />
            </Tool>
            <Tool $w={49}>
              <svg width="18" height="21" viewBox="0 0 18 21" fill="none" stroke="#e4e4e4" strokeWidth="1.300">
                <path d="M1 5V1h16v4M9 1v19M5 20h8" />
              </svg>
            </Tool>
            <Tool $w={52}>
              <svg width="19" height="20" viewBox="0 0 19 20" fill="none" stroke="#fff" strokeWidth="1.400">
                <path d="M1.500 1.500h5v5h-5zM12.500 12.500h5v5h-5zM15 1v6M12 4h6M4 11l3.600 3.800L4 18.600.4 14.800z" />
              </svg>
            </Tool>
            <Tool $w={48}>
              <Hand size={26} strokeWidth={1.2} />
            </Tool>
            <Tool $w={50}>
              <svg width="23" height="22" viewBox="0 0 23 22" fill="none" stroke="#fff" strokeWidth="1.300">
                <path d="M12.700 1a9.600 9.600 0 1 1-4.200 18.300c-2.200 1-4.500 1.600-7.200 1.500 1.200-1.400 2.200-2.600 2.600-4.600A9.600 9.600 0 0 1 12.700 1z" />
              </svg>
            </Tool>
          </Tools>
          <FileTitle>
            <Folder>
              <Fit w={51}>Drafts</Fit>
            </Folder>
            <SlashMark>
              <svg width="9" height="20" viewBox="0 0 9 20" stroke="#757575" strokeWidth="1.200">
                <path d="M8.500.500.5 19.500" />
              </svg>
            </SlashMark>
            <Fit w={120}>GAME RESULT</Fit>
            <TitleCaret>
              <Caret />
            </TitleCaret>
          </FileTitle>
          <Session>
            <Collaborator>C</Collaborator>
            <ShareButton>
              <Fit w={38}>Share</Fit>
            </ShareButton>
            <svg width="13" height="15" viewBox="0 0 13 15" fill="none" stroke="#fff" strokeWidth="1.300">
              <path d="M1 1l10.500 6.500L1 14z" />
            </svg>
            <Zoom>
              <Fit w={34}>100%</Fit>
              <Caret />
            </Zoom>
          </Session>
        </Toolbar>

        <Workspace>
          <Layers>
            <PanelHead $left={22}>
              <svg width="15" height="15" viewBox="0 0 15 15" fill="none" stroke="#b3b3b3" strokeWidth="1.300">
                <circle cx="6.300" cy="6.300" r="5.300" />
                <path d="M10 10l4.500 4.500" />
              </svg>
              <HeadTab $on $gap={13}>
                <Fit w={44}>Layers</Fit>
              </HeadTab>
              <HeadTab $gap={20}>
                <Fit w={44}>Assets</Fit>
              </HeadTab>
              <PageMenu>
                <Fit w={43}>Page 1</Fit>
                <Caret color="#b3b3b3" />
              </PageMenu>
            </PanelHead>
            {layers.map((l) => (
              <LayerRow key={l.label}>
                <GlyphT size={14} color="#b3b3b3" sw={1.2} />
                <Fit w={l.w}>{l.label}</Fit>
              </LayerRow>
            ))}
          </Layers>

          <Canvas>
            {canvasTexts.map((t, i) => (
              <CanvasText key={i} $x={t.x - 301} $y={t.y - 189} $size={t.size} $digits={t.digits}>
                <Fit w={t.w}>{t.text}</Fit>
              </CanvasText>
            ))}
          </Canvas>

          <Inspector>
            <PanelHead $left={20}>
              <HeadTab $on>
                <Fit w={46}>Design</Fit>
              </HeadTab>
              <HeadTab $gap={20}>
                <Fit w={64.5}>Prototype</Fit>
              </HeadTab>
              <HeadTab $gap={20}>
                <Fit w={48}>Inspect</Fit>
              </HeadTab>
            </PanelHead>
            <Section $h={142}>
              <Row>
                <Strong>
                  <Fit w={80}>Background</Fit>
                </Strong>
              </Row>
              <Row>
                <Swatch />
                <Cell $w={91.5}>
                  <Fit w={52}>87C8E3</Fit>
                </Cell>
                <Cell $w={60}>
                  <Fit w={34.5}>100%</Fit>
                </Cell>
                <Push $edge={1}>
                  <svg width="18" height="11" viewBox="0 0 18 11">
                    <path d="M1 5.500C3 2.300 5.800.800 9 .800s6 1.500 8 4.700c-2 3.200-4.800 4.700-8 4.700S3 8.700 1 5.500z" fill="none" stroke="#1a1a1a" strokeWidth="1.300" />
                    <circle cx="9" cy="5.500" r="2.400" fill="#1a1a1a" />
                  </svg>
                </Push>
              </Row>
              <Row>
                <Checkbox>
                  <svg width="10" height="8" viewBox="0 0 10 8" fill="none" stroke="#fff" strokeWidth="1.900">
                    <path d="M1 3.700l2.700 2.700L9 1" />
                  </svg>
                </Checkbox>
                <Cell $w={120}>
                  <Fit w={104.5}>Show in exports</Fit>
                </Cell>
              </Row>
            </Section>
            <Section $h={21} />
            <Section $h={201}>
              <Row>
                <Strong>
                  <Fit w={44}>Export</Fit>
                </Strong>
                <Push $edge={3}>
                  <svg width="14" height="14" viewBox="0 0 14 14" stroke="#1a1a1a" strokeWidth="1.200">
                    <path d="M0 6.500h14" />
                  </svg>
                  <svg width="14" height="14" viewBox="0 0 14 14" stroke="#1a1a1a" strokeWidth="1.200">
                    <path d="M0 6.500h14M7 0v14" />
                  </svg>
                </Push>
              </Row>
              <Row>
                <Cell $w={70}>
                  <Fit w={13.5}>1x</Fit>
                </Cell>
                <SuffixField>
                  <Fit w={37}>Suffix</Fit>
                </SuffixField>
                <Cell $w={37}>
                  <Fit w={29.5}>PNG</Fit>
                </Cell>
                <Caret color="#b3b3b3" />
                <Push $edge={1}>
                  <svg width="19" height="5" viewBox="0 0 19 5" fill="#1a1a1a">
                    <circle cx="2" cy="2.200" r="2" />
                    <circle cx="9.500" cy="2.200" r="2" />
                    <circle cx="17" cy="2.200" r="2" />
                  </svg>
                </Push>
              </Row>
              <ExportButton>
                <Fit w={141}>Export GAME RESULT</Fit>
              </ExportButton>
              <PreviewRow>
                <svg width="6" height="8" viewBox="0 0 6 8" fill="#1a1a1a">
                  <path d="M0 0l6 4-6 4z" />
                </svg>
                <Fit w={51}>Preview</Fit>
              </PreviewRow>
            </Section>
            <Help>?</Help>
          </Inspector>
        </Workspace>

        <Taskbar>
          <Weather>
            <Sun />
            <Lines>
              <Fit w={27.5}>11°C</Fit>
              <Forecast>
                <Fit w={82}>晴れのちくもり</Fit>
              </Forecast>
            </Lines>
          </Weather>
          <Apps>
            {apps.map((a, i) => (
              <AppTile key={i} $tone={a.tone}>
                {a.icon}
                {a.run && <Running $w={a.run[0]} $color={a.run[1]} />}
                {a.count && <Count>{a.count}</Count>}
              </AppTile>
            ))}
          </Apps>
          <Tray>
            <TrayItem $gap={12}>
              <svg width="16" height="10" viewBox="0 0 16 10" fill="none" stroke="#fff" strokeWidth="1.300">
                <path d="M.5 9 8 1.500 15.500 9" />
              </svg>
            </TrayItem>
            <TrayItem $gap={19}>
              <svg width="20" height="14" viewBox="0 0 20 14">
                <path d="M1.500 11a4.500 4.500 0 0 1 3-7 6 6 0 0 1 11 1L19 10z" fill="#a5a5a5" />
                <path d="M4 13.500a3.500 3.500 0 0 1 0-6.500c2-1.500 5-1.500 7 .2 2.500-2 5-1.200 5.800.8a3 3 0 0 1 0 5.500z" fill="#fff" />
              </svg>
            </TrayItem>
            <TrayItem $gap={22}>
              <Fit w={29}>ENG</Fit>
            </TrayItem>
            <TrayItem $gap={10}>
              <svg width="20" height="16" viewBox="0 0 20 16" fill="none" stroke="#fff" strokeWidth="1.500">
                <path d="M.8 5.800a13 13 0 0 1 18.400 0M3.500 8.800a9.200 9.200 0 0 1 13 0M6.300 11.500a5.200 5.200 0 0 1 7.400 0" />
                <circle cx="10" cy="13.800" r="1.800" fill="#fff" stroke="none" />
              </svg>
            </TrayItem>
            <TrayItem $gap={10}>
              <svg width="20" height="18" viewBox="0 0 20 18" fill="none" stroke="#fff" strokeWidth="1.400">
                <path d="M1 6.500h3L8 2.500v13L4 11.500H1zM10.500 6.500q1.500 2.500 0 5M13 4.200q3 4.800 0 9.600" />
                <path d="M15.700 2q4.300 7 0 14" stroke="#666" />
              </svg>
            </TrayItem>
            <TrayItem $gap={20}>
              <svg width="20" height="14" viewBox="0 0 20 14" fill="none" stroke="#fff" strokeWidth="1.400">
                <rect x=".7" y=".7" width="16" height="12.300" rx="2.500" />
                <path d="M3 3h8.500v7.500H3z" fill="#fff" stroke="none" />
                <path d="M18.200 5v4" strokeWidth="2.400" />
              </svg>
            </TrayItem>
            <TrayItem $gap={7}>
              <Lines $end>
                <Fit w={52.5}>9:16 AM</Fit>
                <Fit w={64}>2/11/2022</Fit>
              </Lines>
            </TrayItem>
            <Notices>26</Notices>
          </Tray>
        </Taskbar>
      </Screen>
    </>
  );
}
